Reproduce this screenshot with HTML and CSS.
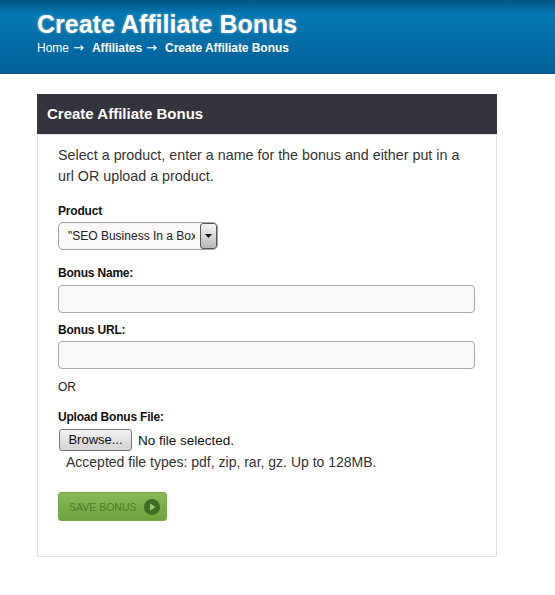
FILE: index.html
```html
<!DOCTYPE html>
<html lang="en">
<head>
<meta charset="utf-8">
<title>Create Affiliate Bonus</title>
<link rel="stylesheet" href="styles.css">
</head>
<body>
<header class="top">
  <h1 class="top-title">Create Affiliate Bonus</h1>
  <nav class="crumbs"><span>Home</span><span class="arrow">→</span><b>Affiliates</b><span class="arrow">→</span><b>Create Affiliate Bonus</b></nav>
</header>
<main class="panel">
  <h2 class="panel-head">Create Affiliate Bonus</h2>
  <form class="panel-body">
    <p class="intro">Select a product, enter a name for the bonus and either put in a url OR upload a product.</p>
    <label class="label label-product" for="product">Product</label>
    <div class="select">
      <select class="select-native" id="product">
        <option>"SEO Business In a Box</option>
      </select>
      <span class="select-btn"><svg width="7" height="4" viewBox="0 0 7 4"><path d="M0 0h7L3.500 4z" fill="#111"/></svg></span>
    </div>
    <label class="label label-name" for="bonus-name">Bonus Name:</label>
    <input class="field" id="bonus-name" type="text">
    <label class="label label-url" for="bonus-url">Bonus URL:</label>
    <input class="field" id="bonus-url" type="text">
    <div class="or">OR</div>
    <div class="label label-upload">Upload Bonus File:</div>
    <div class="file-row">
      <button class="browse" type="button">Browse...</button>
      <span class="file-text">No file selected.</span>
    </div>
    <div class="accepted">Accepted file types: pdf, zip, rar, gz. Up to 128MB.</div>
    <button class="save" type="button">
      <span class="save-text">SAVE BONUS</span>
      <svg class="save-icon" width="16" height="16" viewBox="0 0 16 16"><circle cx="8" cy="8" r="8" fill="#3f6f24"/><path d="M6 4.500v7L11.500 8z" fill="#a5cc7d"/></svg>
    </button>
  </form>
</main>
</body>
</html>
```

FILE: styles.css
```css
* { box-sizing: border-box; }
html, body { margin: 0; padding: 0; }
body { width: 555px; height: 595px; background: #fff; font-family: "Liberation Sans", Arial, sans-serif; overflow: hidden; }

.top {
  height: 74px;
  padding: 9px 0 0 37px;
  background: linear-gradient(#04527f 0, #0479b4 14px, #0472ab 30px, #02609c 70px);
  border-bottom: 1px solid #024c7c;
  color: #fff;
}
.top-title { margin: 0; font-size: 25px; line-height: 30px; font-weight: 700; text-shadow: 0 0 3px rgba(255,255,255,.45); }
.crumbs { margin-top: 1px; font-size: 12px; line-height: 16px; display: flex; }
.crumbs b { font-weight: 700; letter-spacing: -0.05px; }
.arrow { font-family: "DejaVu Sans", sans-serif; font-size: 13px; margin: 0 8px 0 4px; }

.panel { width: 460px; margin: 20px 0 0 37px; }
.panel-head {
  margin: 0;
  height: 40px;
  padding: 0 10px;
  background: #34343e;
  color: #fff;
  font-size: 15px;
  font-weight: 700;
  line-height: 40px;
}
.panel-body {
  height: 423px;
  padding: 10px 21px 0 20px;
  border: 1px solid #e0e0e0;
  color: #333;
}
.intro { margin: 0; font-size: 14.300px; line-height: 21px; }
.label { display: block; font-size: 12px; line-height: 14px; font-weight: 700; letter-spacing: -0.2px; color: #111; }
.label-product { margin-top: 17px; }
.label-name { margin-top: 16px; }
.label-url { margin-top: 10px; }
.label-upload { margin-top: 16px; }

.select {
  margin-top: 4px;
  width: 160px;
  height: 28px;
  display: flex;
  background: #f9f7f7;
  border: 1px solid #a3a3a3;
  border-radius: 5px;
  overflow: hidden;
}
.select-native {
  appearance: none;
  width: 141px;
  height: 26px;
  margin: 0;
  padding: 0 5px 0 9px;
  border: 0;
  outline: 0;
  background: transparent;
  font-family: inherit;
  font-size: 12px;
  color: #222;
}
.select-btn {
  flex: 1;
  display: flex;
  align-items: center;
  justify-content: center;
  background: linear-gradient(#f4f4f4, #b8b8b8);
  border: 1px solid #555;
  border-radius: 3px;
}
.field {
  display: block;
  width: 100%;
  margin: 5px 0 0;
  padding: 0;
  height: 28px;
  background: #f9f7f7;
  border: 1px solid #a8a8a8;
  border-radius: 4px;
}
.label-url + .field { margin-top: 4px; }
.or { margin-top: 11px; font-size: 12px; line-height: 14px; color: #222; }

.file-row { margin: 5px 0 0 1px; display: flex; align-items: center; height: 22px; }
.browse {
  width: 73px;
  height: 22px;
  margin: 0;
  padding: 0;
  text-align: center;
  font-family: inherit;
  font-size: 13px;
  line-height: 20px;
  color: #111;
  background: linear-gradient(#f2f2f2, #d2d2d2);
  border: 1px solid #777;
  border-radius: 3px;
}
.file-text { margin-left: 6px; font-size: 13.500px; color: #111; }
.accepted { margin: 3px 0 0 8px; font-size: 14px; line-height: 16px; color: #333; }

.save {
  margin: 22px 0 0;
  width: 109px;
  height: 29px;
  padding: 0 0 0 10px;
  display: flex;
  align-items: center;
  gap: 7px;
  font-family: inherit;
  background: linear-gradient(#87b956, #6fa33f);
  border: 1px solid #75a845;
  border-radius: 3px;
}
.save-text { font-size: 10.500px; color: #4c7d2c; white-space: nowrap; }
.save-icon { flex: none; }
```
